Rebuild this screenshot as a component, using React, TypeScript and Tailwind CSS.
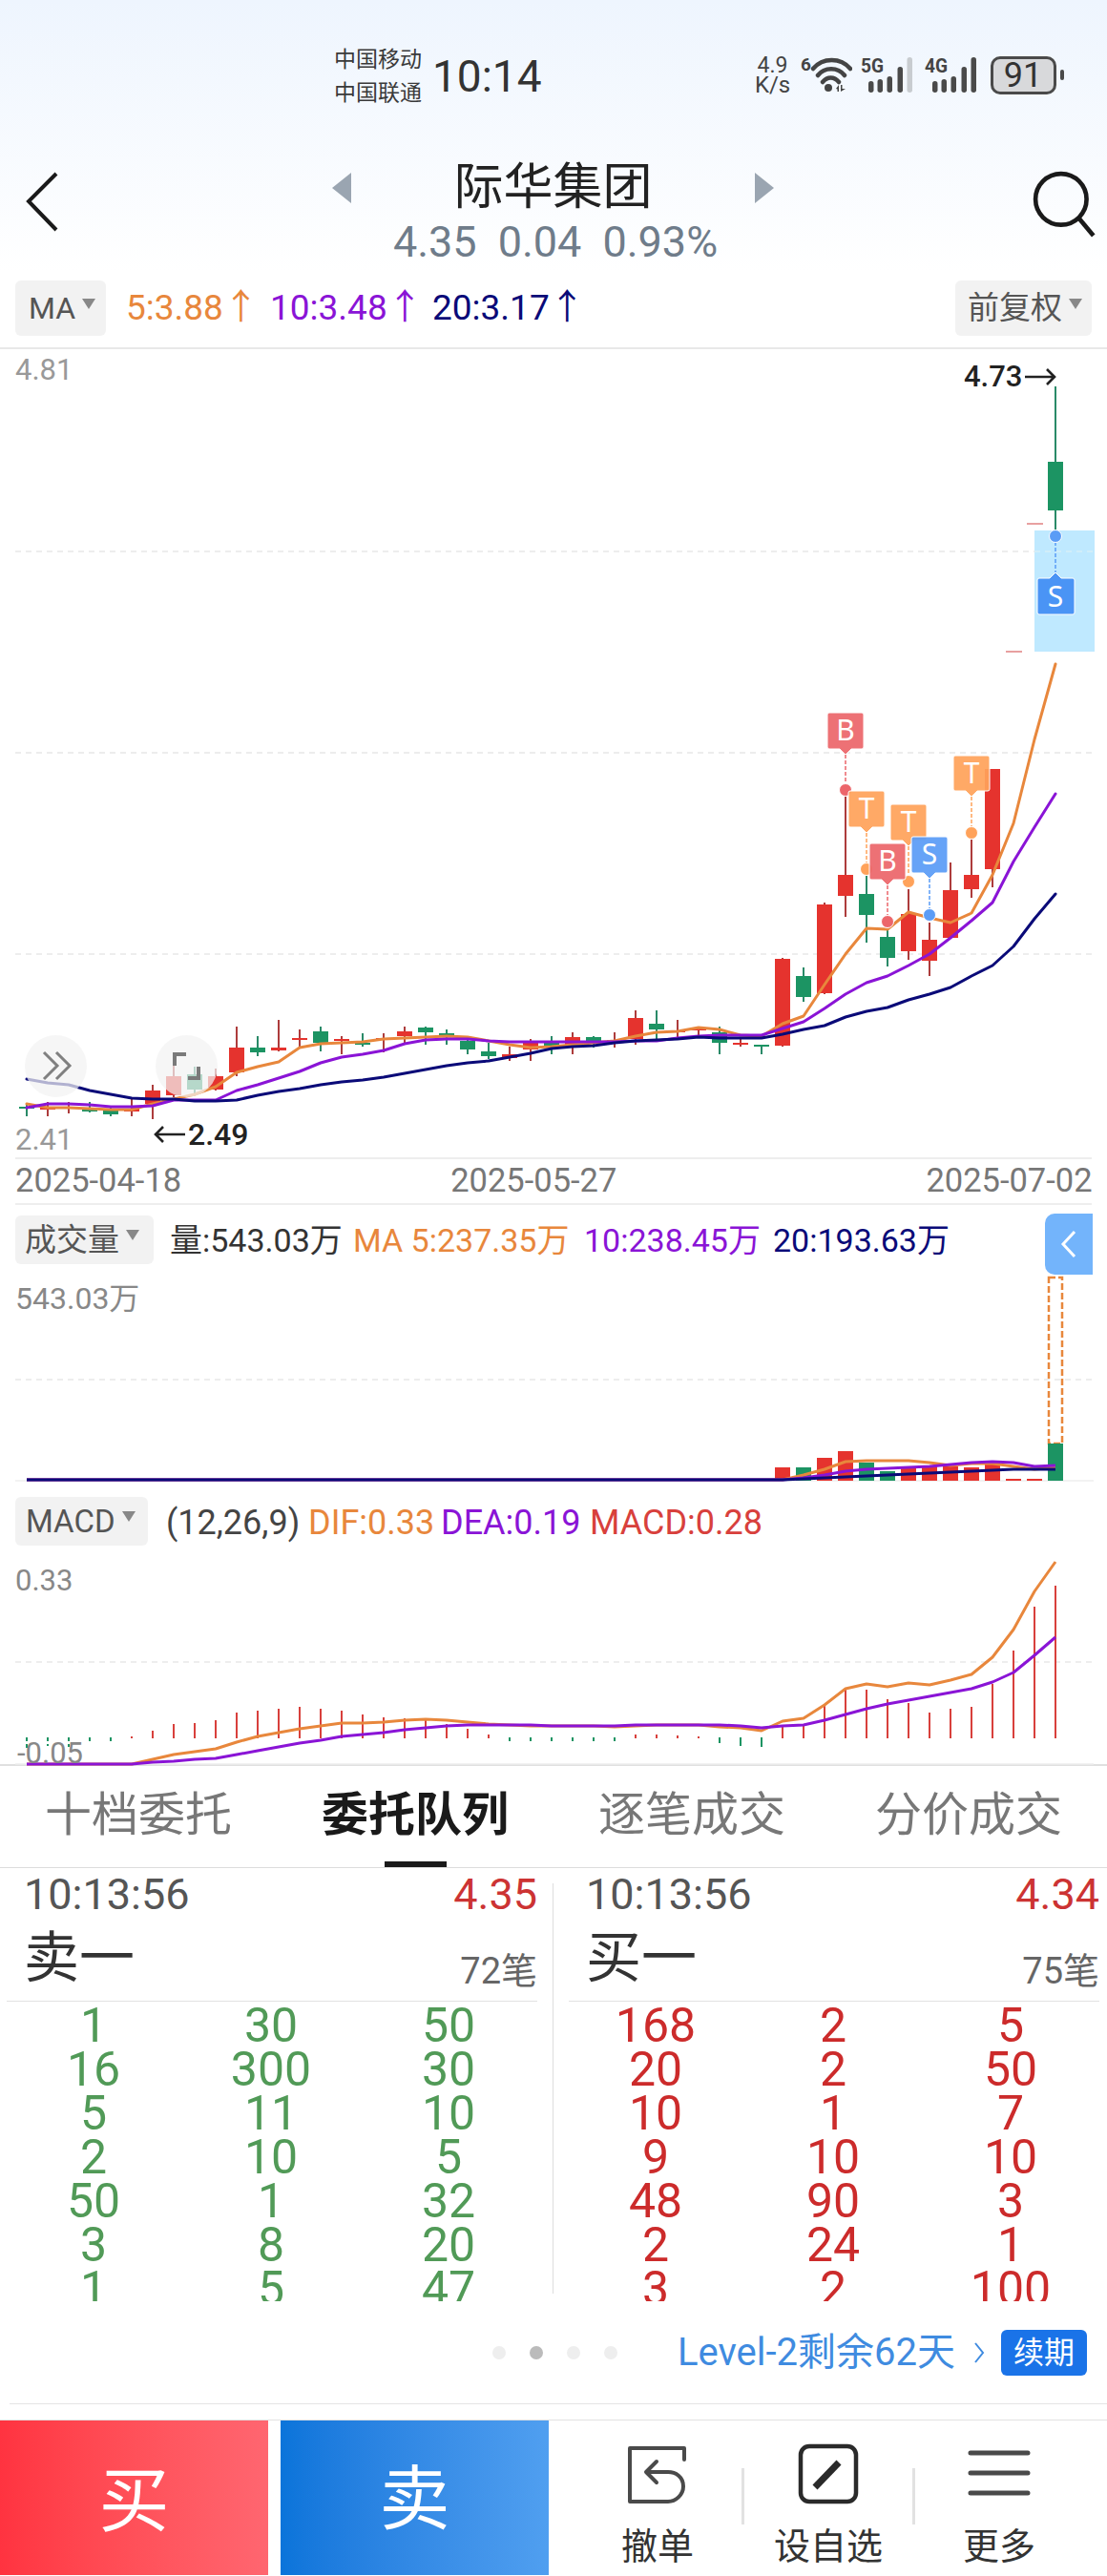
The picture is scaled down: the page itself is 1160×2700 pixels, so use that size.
import React from "react";

type Candle = [number, number, number, number, "r" | "g"];
const X = (i: number) => 28 + 22 * i;
const candles: Candle[] = [
  [1160, 1162, 1157, 1170, "g"], [1160, 1163, 1155, 1170, "r"], [1160, 1162, 1155, 1167, "r"], [1162, 1165, 1155, 1166, "g"],
  [1163, 1168, 1160, 1170, "g"], [1162, 1165, 1152, 1170, "r"], [1143, 1157, 1137, 1173, "r"], [1128, 1148, 1117, 1150, "r"],
  [1126, 1142, 1118, 1148, "g"], [1128, 1142, 1120, 1143, "r"], [1098, 1124, 1076, 1128, "r"], [1098, 1103, 1086, 1107, "g"],
  [1098, 1101, 1069, 1102, "r"], [1088, 1090, 1079, 1098, "r"], [1081, 1093, 1076, 1102, "g"], [1089, 1091, 1086, 1105, "r"],
  [1093, 1095, 1083, 1097, "g"], [1088, 1090, 1083, 1103, "r"], [1081, 1086, 1076, 1094, "r"], [1077, 1082, 1076, 1095, "g"],
  [1083, 1086, 1079, 1095, "g"], [1091, 1100, 1087, 1105, "g"], [1102, 1107, 1093, 1110, "g"], [1105, 1109, 1097, 1112, "r"],
  [1093, 1100, 1089, 1112, "r"], [1091, 1096, 1086, 1105, "g"], [1087, 1095, 1082, 1105, "r"], [1087, 1092, 1086, 1098, "g"],
  [1090, 1092, 1082, 1098, "r"], [1067, 1089, 1059, 1095, "r"], [1073, 1079, 1059, 1089, "g"], [1080, 1082, 1069, 1090, "r"],
  [1078, 1080, 1076, 1085, "r"], [1082, 1093, 1076, 1105, "g"], [1093, 1095, 1087, 1097, "r"], [1095, 1097, 1095, 1105, "g"],
  [1005, 1096, 1004, 1097, "r"], [1023, 1045, 1014, 1050, "g"], [948, 1041, 946, 1042, "r"], [917, 939, 833, 961, "r"],
  [937, 959, 918, 988, "g"], [982, 1004, 975, 1013, "g"], [958, 997, 932, 1006, "r"], [985, 1007, 967, 1023, "r"],
  [933, 983, 904, 983, "r"], [917, 932, 880, 941, "r"], [806, 911, 806, 930, "r"],
];
const ma5 = [1157,1161,1161,1162,1163,1163,1157,1152,1147,1139,1124,1118,1113,1098,1094,1093,1092,1089,1088,1087,1086,1087,1091,1095,1098,1097,1095,1093,1091,1086,1082,1081,1077,1079,1085,1086,1073,1065,1032,1000,973,974,956,962,967,957,917,863,775,696];
const ma10 = [1161,1157,1157,1158,1160,1160,1159,1153,1153,1153,1143,1137,1130,1123,1114,1108,1105,1101,1094,1090,1089,1089,1091,1092,1092,1092,1092,1092,1092,1091,1091,1088,1086,1085,1085,1085,1078,1071,1057,1042,1030,1023,1012,1000,983,965,946,903,867,832];
const ma20 = [1131,1135,1137,1143,1147,1151,1152,1152,1154,1154,1153,1148,1144,1141,1137,1134,1132,1129,1125,1121,1117,1114,1112,1108,1104,1099,1097,1096,1093,1091,1090,1089,1087,1088,1088,1088,1084,1079,1075,1066,1060,1056,1048,1042,1035,1023,1012,992,963,937];
const pts = (a: number[]) => a.map((y, i) => `${X(i)},${y}`).join(" ");

const volBars: [number, number, "r" | "g"][] = [[36,1537,"r"],[37,1537,"g"],[38,1527,"r"],[39,1520,"r"],[40,1532,"g"],[41,1541,"g"],[42,1537,"r"],[43,1536,"r"],[44,1536,"r"],[45,1537,"r"],[46,1530,"r"],[47,1549,"r"],[48,1549,"r"]];
const flat = (n: number, v: number) => Array(n).fill(v) as number[];
const v5 = [...flat(37, 1550),1545,1539,1531,1530,1530,1530,1532,1535,1533,1533,1536,1539,1537];
const v10 = [...flat(36, 1550),1550,1548,1545,1541,1539,1538,1537,1536,1534,1532,1531,1532,1536,1535].slice(0,50);
const v20 = [...flat(37, 1550),1549,1548,1547,1546,1545,1544,1543,1542,1541,1540,1539,1539,1539];

const macdTop = [0,0,0,0,0,1819,1813,1806,1805,1802,1794,1792,1790,1788,1790,1792,1796,1799,1800,1802,1806,1811,1817,0,0,0,0,0,0,1817,1817,1818,1819,0,0,0,1808,1808,1786,1768,1770,1780,1784,1794,1790,1788,1764,1729,1683,1661];
const macdGreen: Record<number, number> = {0:1831,1:1829,2:1830,3:1824,4:1824,23:1824,24:1824,25:1824,26:1824,27:1824,28:1824,33:1826,34:1829,35:1830};
const dif = [1848,1848,1848,1848,1848,1848,1843,1838,1835,1832,1825,1819,1815,1811,1808,1805,1805,1804,1802,1801,1802,1804,1806,1807,1808,1808,1808,1808,1809,1808,1807,1807,1807,1809,1810,1813,1803,1800,1786,1769,1764,1767,1763,1765,1760,1754,1736,1707,1667,1636];
const dea = [1848,1848,1848,1848,1848,1848,1846,1845,1843,1842,1838,1834,1830,1826,1823,1819,1817,1815,1812,1810,1808,1807,1807,1807,1807,1808,1808,1808,1808,1807,1807,1807,1807,1807,1808,1810,1808,1807,1802,1796,1790,1785,1781,1777,1773,1769,1762,1752,1734,1715];

const RED = "#e5332e", GREEN = "#1c9463";

function Tag({ cx, top, bottom, tip, dot, letter, color }: { cx: number; top: number; bottom: number; tip: number; dot: number; letter: string; color: string }) {
  const l = cx - 19, r = cx + 19;
  return (
    <g>
      <line x1={cx} y1={tip} x2={cx} y2={dot} stroke={color} strokeWidth={1.5} strokeDasharray="4 2" />
      <circle cx={cx} cy={dot} r={6.5} fill={color} stroke="#fff" strokeWidth={1} />
      <path d={`M${l + 2} ${top}H${r - 2}Q${r} ${top} ${r} ${top + 2}V${bottom - 2}Q${r} ${bottom} ${r - 2} ${bottom}H${cx + 6}L${cx} ${tip}L${cx - 6} ${bottom}H${l + 2}Q${l} ${bottom} ${l} ${bottom - 2}V${top + 2}Q${l} ${top} ${l + 2} ${top}Z`} fill={color} fillOpacity={0.93} stroke="#fff" strokeWidth={1} />
      <text x={cx} y={top + 29} textAnchor="middle" fontSize={30} fill="#fff" fontFamily="'Noto Sans'">{letter}</text>
    </g>
  );
}

function PriceChart() {
  return (
    <svg className="block" width={1160} height={847} viewBox="0 366 1160 847">
      {[578, 789, 1000].map((y) => (
        <line key={y} x1={16} x2={1146} y1={y} y2={y} stroke="#e8e8e8" strokeWidth={1.5} strokeDasharray="6 5" />
      ))}
      <rect x={1084} y={556} width={63} height={127} fill="#bfe9ff" />
      <line x1={1084} x2={1146} y1={578} y2={578} stroke="#d8eef8" strokeWidth={1.5} strokeDasharray="6 5" />
      {candles.map(([bt, bb, wt, wb, c], i) => (
        <g key={i}>
          <line x1={X(i)} x2={X(i)} y1={wt} y2={wb} stroke={c === "r" ? "#ad3c3c" : "#2a8a68"} strokeWidth={2} />
          <rect x={X(i) - 8} y={bt} width={16} height={bb - bt} fill={c === "r" ? RED : GREEN} />
        </g>
      ))}
      <line x1={1054} x2={1071} y1={683} y2={683} stroke="#e8a0a0" strokeWidth={2} />
      <line x1={1076} x2={1093} y1={549} y2={549} stroke="#e8a0a0" strokeWidth={2} />
      <line x1={1106} x2={1106} y1={405} y2={556} stroke="#2a8a68" strokeWidth={2} />
      <rect x={1098} y={484} width={16} height={51} fill={GREEN} />
      <polyline points={pts(ma5)} fill="none" stroke="#e8873c" strokeWidth={3} strokeLinejoin="round" strokeLinecap="round" />
      <polyline points={pts(ma10)} fill="none" stroke="#8a14d6" strokeWidth={3} strokeLinejoin="round" strokeLinecap="round" />
      <polyline points={pts(ma20)} fill="none" stroke="#0a0a78" strokeWidth={3} strokeLinejoin="round" strokeLinecap="round" />
      <Tag cx={886} top={747} bottom={785} tip={791} dot={828} letter="B" color="#ec666b" />
      <Tag cx={908} top={829} bottom={867} tip={873} dot={911} letter="T" color="#ffa25a" />
      <Tag cx={952} top={843} bottom={881} tip={887} dot={924} letter="T" color="#ffa25a" />
      <Tag cx={930} top={884} bottom={922} tip={928} dot={966} letter="B" color="#ec666b" />
      <Tag cx={974} top={877} bottom={915} tip={921} dot={959} letter="S" color="#5a9cf6" />
      <Tag cx={1018} top={792} bottom={829} tip={835} dot={873} letter="T" color="#ffa25a" />
      <line x1={1106} y1={562} x2={1106} y2={600} stroke="#5a9cf6" strokeWidth={1.5} strokeDasharray="4 2" />
      <circle cx={1106} cy={562} r={6.5} fill="#5a9cf6" stroke="#fff" strokeWidth={1} />
      <path d="M1089 606H1100L1106 600L1112 606H1124Q1126 606 1126 608V642Q1126 644 1124 644H1089Q1087 644 1087 642V608Q1087 606 1089 606Z" fill="#4a94f5" stroke="#fff" strokeWidth={1} />
      <text x={1106} y={636} textAnchor="middle" fontSize={30} fill="#fff" fontFamily="'Noto Sans'">S</text>
      <circle cx={58.5} cy={1117.5} r={32.5} fill="#f2f2f2" fillOpacity={0.72} />
      <circle cx={195.5} cy={1117.5} r={32.5} fill="#f2f2f2" fillOpacity={0.72} />
      <path d="M46 1103L60 1117L46 1131M59 1103L73 1117L59 1131" fill="none" stroke="#808080" strokeWidth={3} />
      <path d="M183 1117V1105H195M197 1130H208V1118" fill="none" stroke="#7a7a7a" strokeWidth={4} />
    </svg>
  );
}

function VolumeChart() {
  return (
    <svg className="block" width={1160} height={217} viewBox="0 1335 1160 217">
      <line x1={16} x2={1146} y1={1445} y2={1445} stroke="#e8e8e8" strokeWidth={1.5} strokeDasharray="6 5" />
      <line x1={16} x2={1146} y1={1551} y2={1551} stroke="#eeeeee" strokeWidth={1.5} />
      {volBars.map(([i, y, c]) => (
        <rect key={i} x={X(i) - 8} y={y} width={16} height={1551 - y} fill={c === "r" ? RED : GREEN} />
      ))}
      <rect x={1099} y={1338} width={14} height={174} fill="none" stroke="#e8873c" strokeWidth={2.5} strokeDasharray="7 3" />
      <rect x={1098} y={1512} width={16} height={39} fill={GREEN} />
      <polyline points={pts(v5)} fill="none" stroke="#e8873c" strokeWidth={3} strokeLinejoin="round" />
      <polyline points={pts(v10)} fill="none" stroke="#8a14d6" strokeWidth={3} strokeLinejoin="round" />
      <polyline points={pts(v20)} fill="none" stroke="#0a0a78" strokeWidth={3} strokeLinejoin="round" />
    </svg>
  );
}

function MacdChart() {
  return (
    <svg className="block" width={1160} height={225} viewBox="0 1625 1160 225">
      <line x1={16} x2={1146} y1={1741} y2={1741} stroke="#e8e8e8" strokeWidth={1.5} strokeDasharray="6 5" />
      <line x1={16} x2={1146} y1={1848} y2={1848} stroke="#eeeeee" strokeWidth={1.5} />
      {macdTop.map((y, i) => y ? <line key={i} x1={X(i)} x2={X(i)} y1={y} y2={1821} stroke="#d8403c" strokeWidth={2} /> : null)}
      {Object.entries(macdGreen).map(([i, y]) => (
        <line key={i} x1={X(+i)} x2={X(+i)} y1={1820} y2={y} stroke="#1c9463" strokeWidth={2} strokeDasharray={+i < 3 ? "4 3" : undefined} />
      ))}
      <polyline points={pts(dif)} fill="none" stroke="#e8873c" strokeWidth={3} strokeLinejoin="round" />
      <polyline points={pts(dea)} fill="none" stroke="#8a14d6" strokeWidth={3} strokeLinejoin="round" />
    </svg>
  );
}

function Signal({ label, fifth }: { label: string; fifth: string }) {
  return (
    <svg width={56} height={40} viewBox="0 0 56 40" className="block">
      <text x={0} y={17} fontSize={20} fontWeight={700} fill="#444" fontFamily="Roboto" textLength={24} lengthAdjust="spacingAndGlyphs">{label}</text>
      <rect x={8} y={26} width={5.5} height={12} rx={2.7} fill="#4a4a4a" />
      <rect x={17.5} y={24} width={5.5} height={14} rx={2.7} fill="#4a4a4a" />
      <rect x={27.5} y={21} width={5.5} height={17} rx={2.7} fill="#4a4a4a" />
      <rect x={38.5} y={11} width={5.5} height={27} rx={2.7} fill="#4a4a4a" />
      <rect x={48.5} y={1} width={5.5} height={37} rx={2.7} fill={fifth} />
    </svg>
  );
}

function StatusBar() {
  return (
    <div className="flex h-[112px] items-start pl-[350px] pt-[45px] text-[#3a3a3a]">
      <div className="flex w-[103px] flex-col text-[23px] leading-[35px]">
        <span>中国移动</span>
        <span>中国联通</span>
      </div>
      <span className="mt-[5px] text-[46px] leading-[60px] text-[#333]">10:14</span>
      <div className="ml-[223px] flex w-[38px] flex-col pt-[14px] text-center text-[#444]">
        <span className="text-[23px] leading-[20px]">4.9</span>
        <span className="text-[24px] leading-[21px]">K/s</span>
      </div>
      <svg width={54} height={40} viewBox="0 0 54 40" className="mt-[15px] ml-[10px] block">
        <text x={0} y={14} fontSize={19} fontWeight={700} fill="#444" fontFamily="Roboto">6</text>
        <path d="M13 12C23 0 42 0 52 12M18 19C25 10 39 10 46 19M23 26C28 20 35 20 40 26" fill="none" stroke="#444" strokeWidth={4.5} strokeLinecap="round" />
        <circle cx={29} cy={32} r={4} fill="#444" />
        <path d="M37 33L40 29V36H38.5V33.5ZM42 29H43.5V33L47 33L42 36Z" fill="#444" />
      </svg>
      <div className="mt-[14px] ml-[9px]"><Signal label="5G" fifth="#c8ccd0" /></div>
      <div className="mt-[14px] ml-[11px]"><Signal label="4G" fifth="#4a4a4a" /></div>
      <div className="mt-[14px] ml-[13px] flex h-[40px] w-[69px] items-center justify-center rounded-[10px] border-[3px] border-[#4a4a4a] bg-[#d8d9db] text-[36px] leading-none text-[#333]">91</div>
      <div className="mt-[28px] ml-[4px] h-[11px] w-[4px] rounded-full bg-[#4a4a4a]" />
    </div>
  );
}

function Header() {
  return (
    <div className="grid h-[172px] grid-cols-[348px_463px_1fr]">
      <svg width={60} height={64} viewBox="0 0 60 64" className="mt-[68px] ml-[26px] block">
        <path d="M33 2L4 31L33 61" fill="none" stroke="#1a1a1a" strokeWidth={4} />
      </svg>
      <div className="flex flex-col items-center pt-[56px]">
        <div className="flex w-full items-center justify-between">
          <div className="h-0 w-0 border-y-[16px] border-r-[20px] border-y-transparent border-r-[#9aa5b1]" />
          <span className="text-[52px] leading-[58px] text-[#222]">际华集团</span>
          <div className="h-0 w-0 border-y-[16px] border-l-[20px] border-y-transparent border-l-[#9aa5b1]" />
        </div>
        <div className="mt-[3px] ml-[5px] flex gap-[22px] text-[45px] leading-[50px] text-[#6f7c8a]">
          <span>4.35</span><span>0.04</span><span>0.93%</span>
        </div>
      </div>
      <svg width={72} height={72} viewBox="0 0 70 70" className="mt-[66px] ml-[271px] block">
        <circle cx={29} cy={30} r={26} fill="none" stroke="#1a1a1a" strokeWidth={4.5} />
        <path d="M47 49L62 67" stroke="#1a1a1a" strokeWidth={4.5} />
      </svg>
    </div>
  );
}

function Caret() {
  return <span className="mb-[10px] ml-[7px] inline-block h-0 w-0 border-x-[7px] border-t-[11px] border-x-transparent border-t-[#888]" />;
}

function MaRow() {
  return (
    <div className="flex h-[82px] items-start justify-between border-b-2 border-[#e8e8e8] px-[16px] pt-[10px]">
      <div className="flex items-center">
        <div className="flex h-[58px] w-[95px] items-center rounded-[6px] bg-[#f2f2f2] pl-[14px] text-[32px] text-[#555]">MA<Caret /></div>
        <div className="ml-[21px] flex text-[37px] leading-[58px]">
          <span className="w-[151px] text-[#e8873c]">5:3.88↑</span>
          <span className="w-[170px] text-[#8a14d6]">10:3.48↑</span>
          <span className="text-[#0a0a78]">20:3.17↑</span>
        </div>
      </div>
      <div className="flex h-[58px] w-[143px] items-center rounded-[6px] bg-[#f2f2f2] pl-[13px] text-[33px] text-[#555]">前复权<Caret /></div>
    </div>
  );
}

function Rows({ data, cls }: { data: number[][]; cls: string }) {
  return (
    <div className={"grid h-[312px] w-[558px] grid-cols-3 content-start overflow-hidden text-center text-[50px] leading-[46px] " + cls}>
      {data.flat().map((v, i) => <span key={i}>{v}</span>)}
    </div>
  );
}

const sell = [[1,30,50],[16,300,30],[5,11,10],[2,10,5],[50,1,32],[3,8,20],[1,5,47]];
const buy = [[168,2,5],[20,2,50],[10,1,7],[9,10,10],[48,90,3],[2,24,1],[3,2,100]];

function Side({ title, price, count, data, cls }: { title: string; price: string; count: string; data: number[][]; cls: string }) {
  return (
    <div className="flex w-[556px] flex-col">
      <div className="flex h-[50px] items-center justify-between pt-[6px] pl-[18px] text-[45px]">
        <span className="text-[#555]">10:13:56</span>
        <span className="text-[#cc3333]">{price}</span>
      </div>
      <div className="flex h-[90px] items-start justify-between border-b border-[#e2e2e2] pl-[18px]">
        <span className="mt-[11px] text-[58px] leading-[66px] text-[#333]">{title}</span>
        <span className="mt-[37px] text-[38px] leading-[42px] text-[#666]">{count}</span>
      </div>
      <div className="-ml-[2px] pt-[2px]"><Rows data={data} cls={cls} /></div>
    </div>
  );
}

function Action({ label, children }: { label: string; children: React.ReactNode }) {
  return (
    <div className="flex w-[176px] flex-col items-center pt-[24px]">
      <div className="h-[64px]">{children}</div>
      <span className="mt-[21px] text-[38px] leading-[46px] text-[#333]">{label}</span>
    </div>
  );
}

export default function App() {
  return (
    <div className="relative h-[2700px] w-[1160px] overflow-hidden bg-white font-['Roboto','Noto_Sans_CJK_SC',sans-serif]">
      <div className="bg-gradient-to-b from-[#eef5fe] to-white">
        <StatusBar />
        <Header />
      </div>
      <MaRow />

      <div className="relative h-[847px]">
        <PriceChart />
        <span className="absolute top-[4px] left-[16px] text-[31px] leading-[36px] text-[#999]">4.81</span>
        <span className="absolute top-[11px] left-[1010px] flex items-center text-[31px] leading-[36px] font-medium text-[#222]">
          4.73
          <svg width={34} height={20} viewBox="0 0 34 20" className="ml-[2px]"><path d="M1 10H32M24 2L32 10L24 18" fill="none" stroke="#222" strokeWidth={2.6} /></svg>
        </span>
        <span className="absolute top-[805px] left-[161px] flex items-center text-[32px] leading-[36px] font-medium text-[#222]">
          <svg width={34} height={20} viewBox="0 0 34 20" className="mr-[2px]"><path d="M33 10H2M10 2L2 10L10 18" fill="none" stroke="#222" strokeWidth={2.6} /></svg>
          2.49
        </span>
        <span className="absolute top-[811px] left-[16px] text-[31px] leading-[36px] text-[#999]">2.41</span>
      </div>
      <div className="mx-[16px] flex h-[50px] items-center border-y-2 border-[#eeeeee] text-[34.5px] whitespace-nowrap text-[#777]">
        <span>2025-04-18</span><span className="ml-[282px]">2025-05-27</span><span className="ml-[324px]">2025-07-02</span>
      </div>

      <div className="flex h-[73px] items-start pt-[9px] pl-[16px]">
        <div className="mt-[2px] flex h-[51px] w-[145px] items-center rounded-[6px] bg-[#f2f2f2] pl-[10px] text-[33px] text-[#555]">成交量<Caret /></div>
        <div className="mt-[4px] ml-[17px] flex text-[34px] leading-[48px]">
          <span className="w-[192px] text-[#333]">量:543.03万</span>
          <span className="w-[242px] text-[#e8873c]">MA 5:237.35万</span>
          <span className="w-[198px] text-[#8a14d6]">10:238.45万</span>
          <span className="text-[#0a0a78]">20:193.63万</span>
        </div>
        <div className="absolute left-[1095px] flex h-[64px] w-[50px] items-center justify-center rounded-l-[10px] bg-[#73b4fb]">
          <svg width={18} height={30} viewBox="0 0 18 30"><path d="M15 2L3 15L15 28" fill="none" stroke="#fff" strokeWidth={3} /></svg>
        </div>
      </div>
      <div className="relative h-[217px]">
        <VolumeChart />
        <span className="absolute top-[7px] left-[16px] text-[32px] leading-[36px] text-[#888]">543.03万</span>
      </div>

      <div className="flex h-[73px] items-start pt-[16px] pl-[16px]">
        <div className="flex h-[51px] w-[139px] items-center rounded-[6px] bg-[#f2f2f2] pl-[11px] text-[33px] text-[#555]">MACD<Caret /></div>
        <div className="mt-[3px] ml-[19px] flex text-[36px] leading-[48px]">
          <span className="w-[149px] text-[#444]">(12,26,9)</span>
          <span className="w-[139px] text-[#e8873c]">DIF:0.33</span>
          <span className="w-[156px] text-[#8a14d6]">DEA:0.19</span>
          <span className="text-[#d8403c]">MACD:0.28</span>
        </div>
      </div>
      <div className="relative h-[225px] border-b-2 border-[#e0e0e0]">
        <MacdChart />
        <span className="absolute top-[13px] left-[16px] text-[31px] leading-[36px] text-[#888]">0.33</span>
        <span className="absolute top-[194px] left-[18px] text-[31px] leading-[36px] text-[#888]">-0.05</span>
      </div>

      <div className="flex h-[107px] border-b border-[#dddddd] text-[49px] leading-[56px]">
        {["十档委托", "委托队列", "逐笔成交", "分价成交"].map((t, i) => (
          <div key={t} className="flex flex-1 flex-col items-center justify-between pt-[24px]">
            <span className={i === 1 ? "font-bold text-[#1a1a1a]" : "text-[#777]"}>{t}</span>
            {i === 1 ? <div className="h-[6px] w-[65px] bg-[#1a1a1a]" /> : null}
          </div>
        ))}
      </div>

      <div className="flex pl-[7px]">
        <Side title="卖一" price="4.35" count="72笔" data={sell} cls="text-[#519a57]" />
        <div className="mt-[16px] ml-[16px] h-[430px] w-px bg-[#dddddd]" />
        <div className="ml-[16px]">
          <Side title="买一" price="4.34" count="75笔" data={buy} cls="text-[#cc2b2b]" />
        </div>
      </div>

      <div className="ml-[10px] flex h-[108px] items-center border-b border-[#e5e5e5] pl-[506px]">
        <div className="flex gap-[25px]">
          <span className="h-[14px] w-[14px] rounded-full bg-[#eeeeee]" />
          <span className="h-[14px] w-[14px] rounded-full bg-[#bbbbbb]" />
          <span className="h-[14px] w-[14px] rounded-full bg-[#eeeeee]" />
          <span className="h-[14px] w-[14px] rounded-full bg-[#eeeeee]" />
        </div>
        <span className="ml-[63px] text-[40px] leading-[44px] text-[#3f8be0]">Level-2剩余62天</span>
        <svg width={12} height={24} viewBox="0 0 12 24" className="ml-[19px]"><path d="M2 2L10 12L2 22" fill="none" stroke="#3f8be0" strokeWidth={2} /></svg>
        <span className="ml-[17px] flex h-[48px] w-[90px] items-center justify-center rounded-[6px] bg-[#1a73e8] text-[32px] text-white">续期</span>
      </div>

      <div className="mt-[16px] flex h-[163px] border-t border-[#e2e2e2]">
        <div className="flex w-[281px] items-center justify-center bg-gradient-to-r from-[#ff3340] to-[#ff6670] pt-[6px] text-[74px] text-white">买</div>
        <div className="ml-[13px] flex w-[281px] items-center justify-center bg-gradient-to-r from-[#0a74da] to-[#509ff0] pt-[2px] text-[74px] text-white">卖</div>
        <div className="ml-[26px] flex">
          <Action label="撤单">
            <svg width={62} height={62} viewBox="0 0 62 62" className="mt-[3px]">
              <path d="M59 14V2H2V58H42C50 58 58 51 58 42C58 32 50 27 42 27H20M30 16L19 27L30 38" fill="none" stroke="#4a4a4a" strokeWidth={4} strokeLinejoin="round" strokeLinecap="round" />
            </svg>
          </Action>
          <div className="mt-[50px] h-[59px] w-[3px] bg-[#e2e2e2]" />
          <Action label="设自选">
            <svg width={64} height={64} viewBox="0 0 64 64">
              <rect x={3} y={3} width={58} height={58} rx={9} fill="none" stroke="#2a2a2a" strokeWidth={4.5} />
              <path d="M18 46L43 20" stroke="#2a2a2a" strokeWidth={7} />
            </svg>
          </Action>
          <div className="mt-[50px] h-[59px] w-[3px] bg-[#e2e2e2]" />
          <Action label="更多">
            <svg width={66} height={64} viewBox="0 0 66 64">
              <path d="M3 10H63M3 31H63M3 52H63" stroke="#4a4a4a" strokeWidth={5} strokeLinecap="round" />
            </svg>
          </Action>
        </div>
      </div>
    </div>
  );
}
